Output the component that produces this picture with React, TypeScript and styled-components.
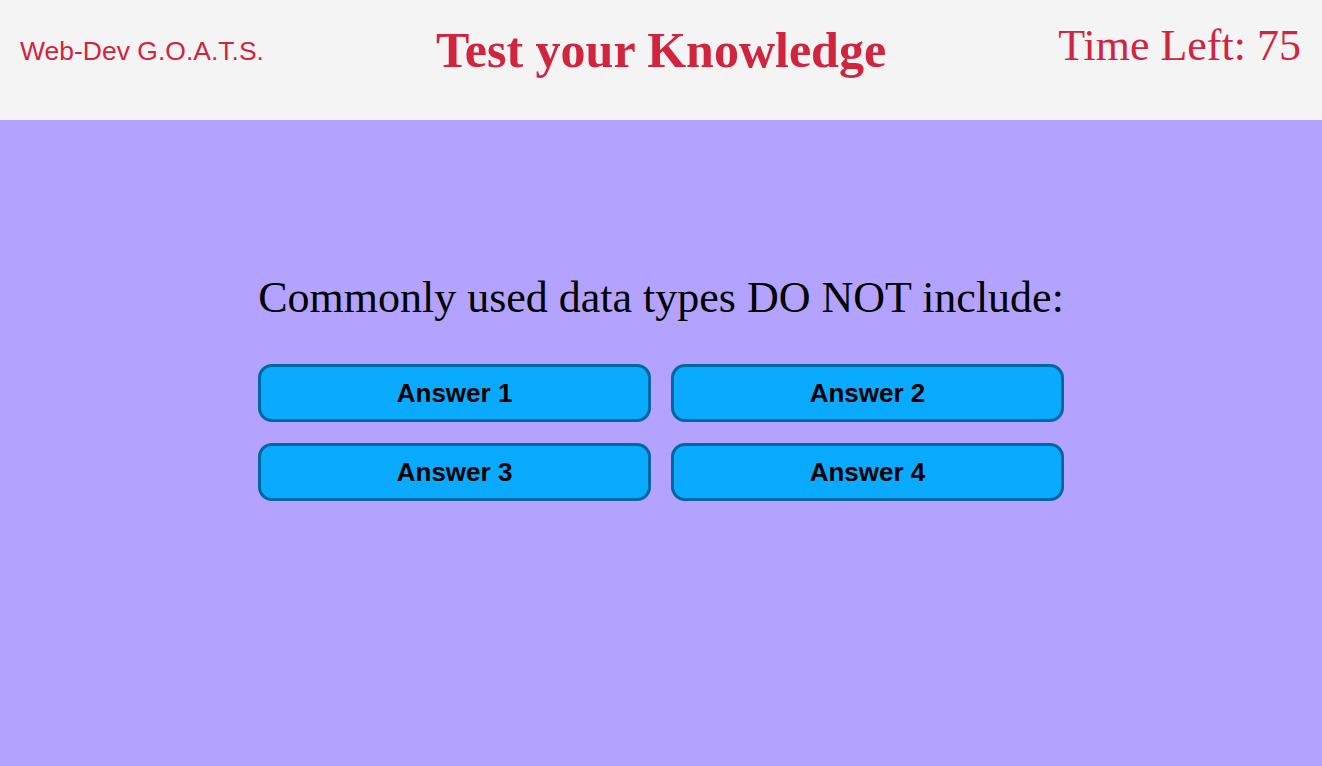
import React from "react";
import styled, { createGlobalStyle } from "styled-components";

const GlobalStyle = createGlobalStyle`
  html, body { margin: 0; padding: 0; }
  body { background: #b3a3ff; font-family: "Liberation Serif", "Times New Roman", serif; }
  * { box-sizing: border-box; }
`;

const Page = styled.div`
  display: flex;
  flex-direction: column;
  min-height: 100vh;
`;

const Header = styled.header`
  height: 120px;
  background: #f4f4f4;
  display: flex;
  justify-content: space-between;
  align-items: flex-start;
  padding: 0 21px 0 20px;
  color: #d1253f;
`;

const Brand = styled.div`
  font-family: "Liberation Sans", Arial, sans-serif;
  font-size: 26.5px;
  line-height: 30px;
  margin-top: 36px;
`;

const Title = styled.h1`
  margin: 22px 0 0;
  font-family: "Liberation Serif", "Times New Roman", serif;
  font-weight: bold;
  font-size: 50px;
  line-height: 56px;
`;

const Timer = styled.div`
  margin-top: 21px;
  font-family: "Liberation Serif", "Times New Roman", serif;
  font-size: 44px;
  line-height: 50px;
`;

const Main = styled.main`
  flex: 1;
  background: #b3a3ff;
  display: flex;
  justify-content: center;
  align-items: flex-start;
  padding-top: 152px;
`;

const Quiz = styled.section`
  width: fit-content;
  display: flex;
  flex-direction: column;
  gap: 41px;
`;

const Question = styled.h2`
  margin: 0;
  font-family: "Liberation Serif", "Times New Roman", serif;
  font-weight: normal;
  font-size: 44px;
  line-height: 51px;
  color: #000;
  white-space: nowrap;
`;

const Answers = styled.div`
  display: grid;
  grid-template-columns: 1fr 1fr;
  column-gap: 20px;
  row-gap: 21px;
`;

const AnswerButton = styled.button`
  height: 58px;
  display: flex;
  align-items: center;
  justify-content: center;
  background: #09aaff;
  border: 3px solid #0067a0;
  border-radius: 14px;
  font-family: "Liberation Sans", Arial, sans-serif;
  font-weight: bold;
  font-size: 26px;
  color: #000;
  padding: 0;
  cursor: pointer;
`;

export default function App() {
  const answers = ["Answer 1", "Answer 2", "Answer 3", "Answer 4"];
  return (
    <>
      <GlobalStyle />
      <Page>
        <Header>
          <Brand>Web-Dev G.O.A.T.S.</Brand>
          <Title>Test your Knowledge</Title>
          <Timer>Time Left: 75</Timer>
        </Header>
        <Main>
          <Quiz>
            <Question>Commonly used data types DO NOT include:</Question>
            <Answers>
              {answers.map((a) => (
                <AnswerButton key={a}>{a}</AnswerButton>
              ))}
            </Answers>
          </Quiz>
        </Main>
      </Page>
    </>
  );
}
